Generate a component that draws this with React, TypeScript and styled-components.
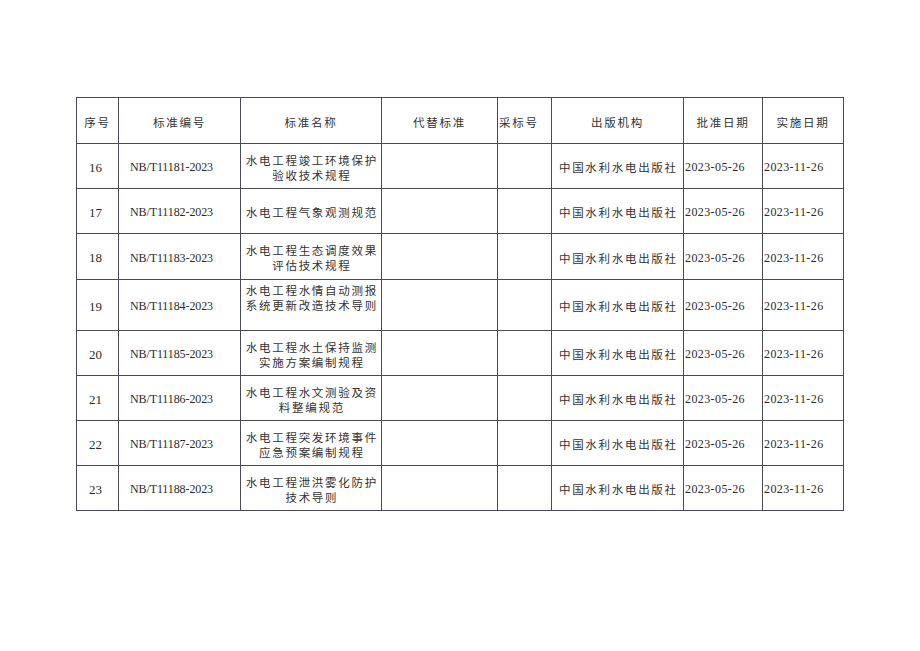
import { createGlobalStyle, styled } from "styled-components";

const GlobalStyle = createGlobalStyle`
  html, body {
    margin: 0;
    padding: 0;
    background: #ffffff;
  }
  body {
    font-family: "Liberation Serif", "Noto Sans CJK SC", serif;
    color: #2b2b2b;
  }
`;

const Page = styled.main`
  width: 920px;
  height: 651px;
  padding: 97px 0 0 76px;
  box-sizing: border-box;
`;

const Table = styled.table`
  border-collapse: collapse;
  table-layout: fixed;
  width: 768px;
`;

const Row = styled.tr<{ $h: number }>`
  height: ${({ $h }) => $h}px;
`;

const HeadCell = styled.th<{ $align?: "left" | "center" }>`
  border: 1px solid #4a4a52;
  padding: 3px 0 0 ${({ $align }) => ($align === "left" ? "1px" : "0")};
  text-align: ${({ $align }) => $align ?? "center"};
  font-family: "Noto Sans CJK SC", sans-serif;
  font-weight: 400;
  font-size: 11.5px;
  letter-spacing: 1.7px;
  color: #333;
  white-space: nowrap;
  overflow: hidden;
`;

const TextCell = styled.td<{ $top?: boolean }>`
  border: 1px solid #4a4a52;
  padding: ${({ $top }) => ($top ? "0 0 14px" : "3px 0 0")};
  text-align: center;
  vertical-align: middle;
  font-family: "Noto Sans CJK SC", sans-serif;
  font-size: 11.5px;
  line-height: 15px;
  letter-spacing: 1.7px;
  color: #333;
  white-space: nowrap;
  overflow: hidden;
`;

const Line = styled.div`
  margin-right: -1.7px;
`;

const NumCell = styled.td<{ $align?: "left" | "center"; $size?: number; $pr?: number }>`
  border: 1px solid #4a4a52;
  padding: 3px ${({ $pr }) => $pr ?? 0}px 0 ${({ $align }) => ($align === "left" ? "1px" : "0")};
  text-align: ${({ $align }) => $align ?? "center"};
  vertical-align: middle;
  font-family: "Liberation Serif", serif;
  font-size: ${({ $size }) => $size ?? 12}px;
  letter-spacing: ${({ $align }) => ($align === "left" ? "0.4px" : "-0.1px")};
  color: #2b2b2b;
  white-space: nowrap;
`;

const EmptyCell = styled.td`
  border: 1px solid #4a4a52;
`;

const widths = [42, 122, 141, 116, 54, 132, 79, 81];

type Item = {
  no: number;
  code: string;
  name: string[];
  h: number;
  top?: boolean;
};

const items: Item[] = [
  { no: 16, code: "NB/T11181-2023", name: ["水电工程竣工环境保护", "验收技术规程"], h: 45 },
  { no: 17, code: "NB/T11182-2023", name: ["水电工程气象观测规范"], h: 45 },
  { no: 18, code: "NB/T11183-2023", name: ["水电工程生态调度效果", "评估技术规程"], h: 46 },
  { no: 19, code: "NB/T11184-2023", name: ["水电工程水情自动测报", "系统更新改造技术导则"], h: 51, top: true },
  { no: 20, code: "NB/T11185-2023", name: ["水电工程水土保持监测", "实施方案编制规程"], h: 45 },
  { no: 21, code: "NB/T11186-2023", name: ["水电工程水文测验及资", "料整编规范"], h: 45 },
  { no: 22, code: "NB/T11187-2023", name: ["水电工程突发环境事件", "应急预案编制规程"], h: 45 },
  { no: 23, code: "NB/T11188-2023", name: ["水电工程泄洪雾化防护", "技术导则"], h: 45 },
];

export default function App() {
  return (
    <>
      <GlobalStyle />
      <Page>
        <Table>
          <colgroup>
            {widths.map((w, i) => (
              <col key={i} style={{ width: w }} />
            ))}
          </colgroup>
          <thead>
            <Row $h={46}>
              <HeadCell>序号</HeadCell>
              <HeadCell>标准编号</HeadCell>
              <HeadCell>标准名称</HeadCell>
              <HeadCell>代替标准</HeadCell>
              <HeadCell $align="left">采标号</HeadCell>
              <HeadCell>出版机构</HeadCell>
              <HeadCell>批准日期</HeadCell>
              <HeadCell>实施日期</HeadCell>
            </Row>
          </thead>
          <tbody>
            {items.map((it) => (
              <Row key={it.no} $h={it.h}>
                <NumCell $size={13} $pr={4}>
                  {it.no}
                </NumCell>
                <NumCell $pr={16}>{it.code}</NumCell>
                <TextCell $top={it.top}>
                  {it.name.map((line) => (
                    <Line key={line}>{line}</Line>
                  ))}
                </TextCell>
                <EmptyCell />
                <EmptyCell />
                <TextCell>
                  <Line>中国水利水电出版社</Line>
                </TextCell>
                <NumCell $align="left">2023-05-26</NumCell>
                <NumCell $align="left">2023-11-26</NumCell>
              </Row>
            ))}
          </tbody>
        </Table>
      </Page>
    </>
  );
}
